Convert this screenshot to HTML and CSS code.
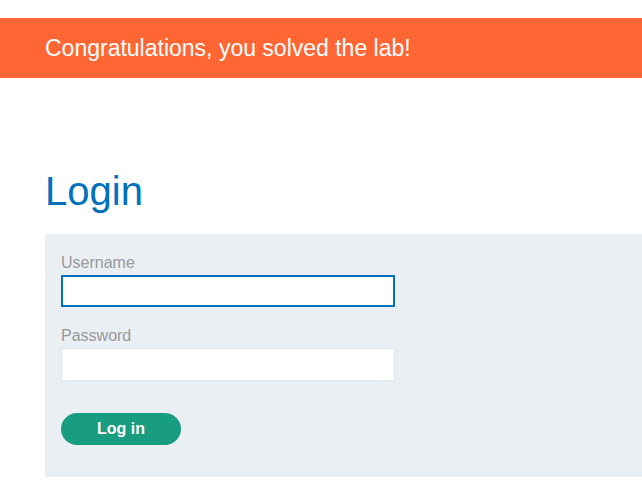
FILE: index.html
```html
<!DOCTYPE html>
<html>
<head>
<meta charset="utf-8">
<link rel="stylesheet" href="styles.css">
</head>
<body>
<div class="banner">
  <p class="banner-text">Congratulations, you solved the lab!</p>
</div>
<main class="content">
  <h1 class="title">Login</h1>
  <form class="login-form">
    <label class="field-label" for="username">Username</label>
    <input class="field-input field-focused" id="username" type="text">
    <label class="field-label" for="password">Password</label>
    <input class="field-input" id="password" type="password">
    <button class="login-button" type="button">Log in</button>
  </form>
</main>
</body>
</html>
```
FILE: styles.css
```css
html, body {
  margin: 0;
  padding: 0;
  background: #fff;
  font-family: "Liberation Sans", Arial, sans-serif;
}
.banner {
  margin-top: 18px;
  height: 60px;
  background: #ff6633;
  display: flex;
  align-items: center;
  padding-left: 45px;
}
.banner-text {
  margin: 0;
  color: #fff;
  font-size: 23px;
  line-height: 60px;
}
.content {
  padding-left: 45px;
}
.title {
  margin: 89px 0 19px 0;
  font-size: 40px;
  line-height: 48px;
  font-weight: normal;
  color: #0071bc;
}
.login-form {
  background: #e9eff2;
  padding: 18px 16px 32px 16px;
  display: flex;
  flex-direction: column;
  align-items: flex-start;
}
.field-label {
  font-size: 16px;
  line-height: 22px;
  color: #999;
}
.field-input {
  box-sizing: border-box;
  width: 334px;
  height: 33px;
  margin: 1px 0 18px 0;
  border: 1px solid #e2e5e8;
  background: #fff;
  outline: none;
  padding: 0 8px;
  font-size: 16px;
}
.field-focused {
  border: 2px solid #0071bc;
  height: 32px;
}
.login-button {
  margin-top: 14px;
  width: 120px;
  height: 32px;
  border: none;
  border-radius: 16px;
  background: #189d80;
  color: #fff;
  font-family: "Liberation Sans", Arial, sans-serif;
  font-weight: bold;
  font-size: 16px;
  cursor: pointer;
}
```
